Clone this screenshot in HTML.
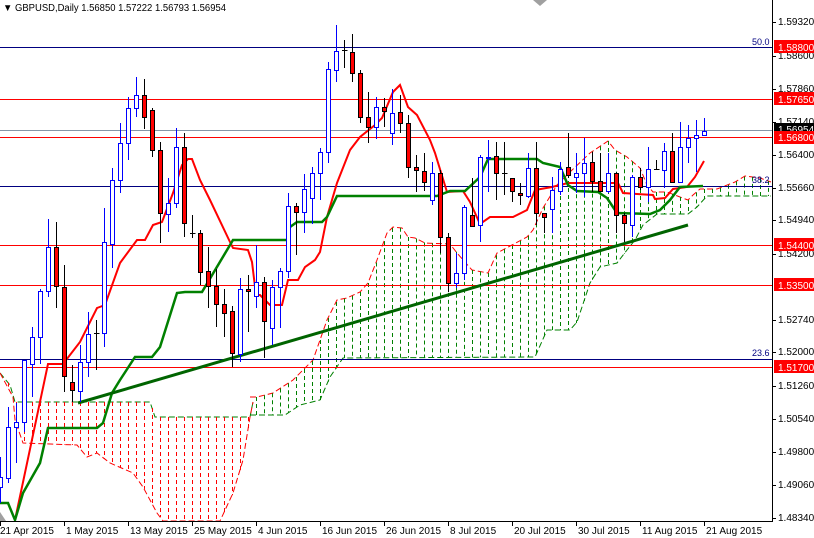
<!DOCTYPE html>
<html><head><meta charset="utf-8"><style>
html,body{margin:0;padding:0;background:#fff;}
body{width:814px;height:538px;overflow:hidden;position:relative;font-family:"Liberation Sans",sans-serif;}
svg{position:absolute;left:0;top:0;}
</style></head><body>
<svg id="c" width="814" height="538" xmlns="http://www.w3.org/2000/svg" font-family="Liberation Sans, sans-serif">
<g id="cloud"></g>
<g id="hl" shape-rendering="crispEdges">
<line x1="0" y1="47.5" x2="772" y2="47.5" stroke="#000080"/>
<line x1="0" y1="99.5" x2="772" y2="99.5" stroke="#ff0000"/>
<line x1="0" y1="130.5" x2="772" y2="130.5" stroke="#8596a8"/>
<line x1="0" y1="137.5" x2="772" y2="137.5" stroke="#ff0000"/>
<line x1="0" y1="186.5" x2="772" y2="186.5" stroke="#000080"/>
<line x1="0" y1="245.5" x2="772" y2="245.5" stroke="#ff0000"/>
<line x1="0" y1="285.5" x2="772" y2="285.5" stroke="#ff0000"/>
<line x1="0" y1="359.5" x2="772" y2="359.5" stroke="#000080"/>
<line x1="0" y1="367.5" x2="772" y2="367.5" stroke="#ff0000"/>
</g>
<text x="752" y="45" font-size="9" fill="#000080">50.0</text>
<text x="752" y="183" font-size="9" fill="#000080">38.2</text>
<text x="752" y="356" font-size="9" fill="#000080">23.6</text>
<polyline fill="none" stroke="#ff0000" stroke-width="2" points="15,520 48,364 63,364 80,342 97,308 105,305 120,263 137,240 145,240 153,225 162,222 173,193 182,165 188,159 192,159 200,180 210,200 230,242 233,248 248,250 252,262 256,295 260,295 270,305 282,305 288,280 298,280 305,267 315,260 320,252 327,217 337,183 350,150 360,137 375,125 382,118 393,92 400,85 408,107 417,115 430,140 435,153 447,192 463,191 470,202 480,224 490,217 513,217 527,210 535,190 552,187 568,183 618,183 623,193 637,194 653,195 655,199 665,198 673,189 687,187 695,177 704,161"/>
<polyline fill="none" stroke="#008000" stroke-width="2.5" points="0,503 8,503 15,520 23,493 40,463 48,428 97,428 103,423 112,393 120,380 135,357 152,357 160,347 177,293 185,292 202,292 233,240 287,240 290,227 297,222 322,222 327,217 337,196 437,196 450,191 465,191 480,177 488,159 537,159 543,163 560,167 568,185 577,191 598,192 607,198 617,213 650,214 660,210 670,200 680,187 703,186"/>
<line x1="78" y1="403" x2="688" y2="225" stroke="#006400" stroke-width="3"/>
<g id="candles" shape-rendering="crispEdges"></g>
<rect x="772" y="0" width="42" height="538" fill="#fff"/>
<rect x="0" y="522" width="814" height="16" fill="#fff"/>
<g shape-rendering="crispEdges" stroke="#000">
<line x1="772.5" y1="0" x2="772.5" y2="522"/>
<line x1="0" y1="521.5" x2="773" y2="521.5"/>
</g>
<g id="ticks" stroke="#000" shape-rendering="crispEdges"></g>
<g font-size="10" fill="#000">
<text x="778" y="25">1.59320</text>
<text x="778" y="59">1.58600</text>
<text x="778" y="92">1.57860</text>
<text x="778" y="125">1.57140</text>
<text x="778" y="158">1.56400</text>
<text x="778" y="191">1.55660</text>
<text x="778" y="223">1.54940</text>
<text x="778" y="257">1.54200</text>
<text x="778" y="323">1.52740</text>
<text x="778" y="355">1.52000</text>
<text x="778" y="389">1.51260</text>
<text x="778" y="422">1.50540</text>
<text x="778" y="455">1.49800</text>
<text x="778" y="488">1.49060</text>
<text x="778" y="521">1.48340</text>
</g>
<g font-size="10" fill="#fff">
<rect x="774" y="40" width="40" height="13" fill="#ff0000"/><text x="778" y="51">1.58800</text>
<rect x="774" y="92" width="40" height="13" fill="#ff0000"/><text x="778" y="103">1.57650</text>
<rect x="774" y="123" width="40" height="12" fill="#000"/><text x="778" y="133">1.56954</text>
<rect x="774" y="131" width="40" height="13" fill="#ff0000"/><text x="778" y="141">1.56800</text>
<rect x="774" y="238" width="40" height="13" fill="#ff0000"/><text x="778" y="249">1.54400</text>
<rect x="774" y="278" width="40" height="13" fill="#ff0000"/><text x="778" y="289">1.53500</text>
<rect x="774" y="360" width="40" height="13" fill="#ff0000"/><text x="778" y="371">1.51700</text>
</g>
<g font-size="10" fill="#000">
<text x="0" y="534">21 Apr 2015</text>
<text x="66" y="534">1 May 2015</text>
<text x="130" y="534">13 May 2015</text>
<text x="194" y="534">25 May 2015</text>
<text x="258" y="534">4 Jun 2015</text>
<text x="322" y="534">16 Jun 2015</text>
<text x="386" y="534">26 Jun 2015</text>
<text x="450" y="534">8 Jul 2015</text>
<text x="514" y="534">20 Jul 2015</text>
<text x="578" y="534">30 Jul 2015</text>
<text x="642" y="534">11 Aug 2015</text>
<text x="706" y="534">21 Aug 2015</text>
</g>
<polygon points="533,0 547,0 540,6" fill="#a0a0a0"/>
<polygon points="0,512 6,521 0,521" fill="#a0a0a0"/>
<text x="3" y="11" font-size="10" fill="#000" textLength="223" lengthAdjust="spacingAndGlyphs">▼ GBPUSD,Daily  1.56850 1.57222 1.56793 1.56954</text>
</svg>
<script>
var NS="http://www.w3.org/2000/svg";
function el(p,t,a){var e=document.createElementNS(NS,t);for(var k in a)e.setAttribute(k,a[k]);p.appendChild(e);return e;}
var C=[
[0,477,487,457,503,'b'],[8,427,478,407,483,'b'],[16,422,427,403,463,'b'],[24,360,422,360,432,'b'],[32,337,364,327,397,'b'],
[40,291,337,289,364,'b'],[48,247,291,219,297,'b'],[56,247,286,222,308,'r'],[64,287,376,265,392,'r'],[72,382,390,365,402,'r'],
[80,362,391,345,402,'b'],[88,334,362,312,377,'b'],[96,333,333,320,370,'d'],[104,242,333,208,347,'b'],[112,180,244,168,268,'b'],
[120,143,180,123,193,'b'],[128,108,143,97,160,'b'],[136,95,108,77,117,'b'],[144,95,117,79,129,'r'],[152,110,150,108,157,'r'],
[160,150,213,142,243,'r'],[168,203,214,178,232,'b'],[176,147,203,128,208,'b'],[184,147,223,133,237,'r'],[192,233,233,215,238,'d'],
[200,233,272,230,285,'r'],[208,271,286,247,308,'r'],[216,286,304,269,327,'r'],[224,304,313,289,337,'r'],[232,311,353,306,367,'r'],
[240,289,354,278,362,'b'],[248,289,291,275,332,'r'],[256,282,296,245,308,'b'],[264,282,321,277,358,'r'],[272,287,328,280,345,'b'],
[280,271,287,268,328,'b'],[288,206,271,193,278,'b'],[296,206,212,203,255,'r'],[304,189,212,174,233,'b'],[312,173,198,167,224,'b'],
[320,152,173,148,200,'b'],[328,69,152,62,163,'b'],[336,51,70,25,82,'b'],[344,50,50,40,68,'d'],[352,52,73,34,82,'r'],
[360,73,117,70,123,'r'],[368,117,127,92,143,'r'],[376,107,127,97,139,'b'],[384,107,111,98,127,'r'],[392,113,133,89,145,'b'],
[400,112,123,95,133,'r'],[408,123,167,115,178,'r'],[416,167,170,155,192,'r'],[424,171,182,153,191,'r'],[432,173,200,162,205,'b'],
[440,173,237,170,253,'r'],[448,237,283,233,292,'r'],[456,273,283,253,288,'b'],[464,207,273,205,280,'b'],[472,215,226,178,227,'r'],
[480,157,225,155,242,'b'],[488,157,158,140,192,'b'],[496,156,173,142,200,'r'],[504,173,173,142,195,'d'],[512,178,191,178,202,'r'],
[520,193,195,183,205,'r'],[528,168,196,153,198,'b'],[536,168,213,142,225,'r'],[544,213,217,213,233,'r'],[552,190,209,177,233,'b'],
[560,169,191,162,195,'b'],[568,167,175,133,178,'r'],[576,173,177,153,193,'b'],[584,163,173,138,197,'b'],[592,162,181,152,192,'r'],
[600,181,191,153,192,'r'],[608,173,191,153,193,'b'],[616,173,215,172,233,'r'],[624,215,223,213,242,'r'],[632,177,225,175,237,'b'],
[640,177,187,168,190,'r'],[648,169,187,147,202,'b'],[656,169,169,160,170,'d'],[664,151,170,143,188,'b'],[672,151,182,133,183,'r'],
[680,147,182,122,183,'b'],[688,138,147,125,163,'b'],[696,135,138,120,172,'b'],[704,131,135,118,136,'b']];
var g=document.getElementById('candles');
C.forEach(function(c){var x=c[0]+0.5,col=c[5];
 var wc=col=='b'?'#0000ff':'#000';
 el(g,'line',{x1:x,y1:c[3],x2:x,y2:c[4],stroke:wc});
 if(col=='d'){el(g,'line',{x1:x-2.5,y1:c[1]+0.5,x2:x+3,y2:c[1]+0.5,stroke:'#000'});return;}
 var h=Math.max(1,c[2]-c[1]);
 if(col=='b')el(g,'rect',{x:x-2,y:c[1]+0.5,width:4,height:h,fill:'#fff',stroke:'#0000ff'});
 else el(g,'rect',{x:x-2,y:c[1]+0.5,width:4,height:h,fill:'#ff0000',stroke:'#000'});
});
function interp(P,x){for(var i=0;i<P.length-1;i++){if(x>=P[i][0]&&x<=P[i+1][0]){var t=(x-P[i][0])/((P[i+1][0]-P[i][0])||1);return P[i][1]+t*(P[i+1][1]-P[i][1]);}}return null;}
var RT=[[0,373],[10,385],[15,402],[150,402],[155,417],[250,417],[253,402]];
var RB=[[0,373],[13,397],[15,420],[23,443],[77,445],[87,457],[97,453],[110,463],[133,473],[143,487],[157,513],[163,521],[220,521],[233,493],[243,460],[250,417],[253,402]];
var GT=[[250,397],[257,397],[273,393],[293,380],[313,360],[327,320],[337,300],[347,298],[360,292],[368,283],[377,260],[387,233],[393,227],[402,228],[408,237],[415,238],[425,243],[450,244],[457,253],[472,270],[488,273],[497,253],[512,245],[527,237],[533,230],[543,208],[557,185],[570,172],[590,153],[608,141],[615,150],[627,157],[640,168],[647,185],[653,192],[667,192],[680,197],[688,200],[693,195],[700,189],[717,189],[735,182],[745,176],[760,178],[771,182]];
var GB=[[250,415],[285,415],[300,405],[320,400],[330,377],[343,358],[535,357],[547,330],[570,330],[577,322],[590,283],[600,267],[617,263],[627,250],[635,240],[643,225],[657,214],[688,214],[697,207],[707,196],[771,196]];
var cl=document.getElementById('cloud');
function pl(P,col){el(cl,'polyline',{points:P.map(function(p){return p.join(',')}).join(' '),fill:'none',stroke:col,'stroke-width':1,'stroke-dasharray':'6,3'});}
pl(RT,'#008000');pl(RB,'#ff0000');pl(GT,'#ff0000');pl(GB,'#008000');
for(var x=0;x<=770;x+=8){
 var a,b,col;
 if(x<252){a=interp(RT,x);b=interp(RB,x);col='#ff0000';}else{a=interp(GT,x);b=interp(GB,x);col='#008000';}
 if(a==null||b==null)continue;
 if(b-a>2)el(cl,'line',{x1:x+0.5,y1:a,x2:x+0.5,y2:b,stroke:col,'stroke-dasharray':'4,3'});
}
var tk=document.getElementById('ticks');
[22,56,89,122,155,188,220,254,320,352,386,419,452,485,518].forEach(function(y){el(tk,'line',{x1:772,y1:y+0.5,x2:776,y2:y+0.5});});
for(var i=0;i<12;i++){el(tk,'line',{x1:i*64+0.5,y1:521,x2:i*64+0.5,y2:526});}
</script>
</body></html>
